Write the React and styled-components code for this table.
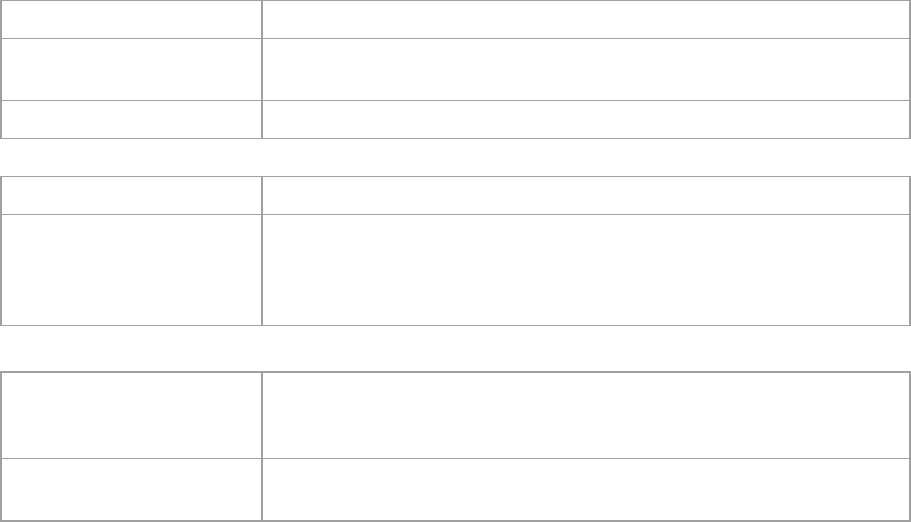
import React from "react";
import styled, { createGlobalStyle } from "styled-components";

const Global = createGlobalStyle`
  html, body { margin: 0; padding: 0; background: #ffffff; }
  body { font-family: "Liberation Sans", Arial, sans-serif; }
`;

const LINE = "#a0a0a0";

const Page = styled.div`
  display: flex;
  flex-direction: column;
  width: 911px;
`;

const Table = styled.div`
  display: flex;
  flex-direction: column;
  margin-top: ${(p) => p.$gap || 0}px;
  border-left: 2px solid ${LINE};
  border-right: 2px solid ${LINE};
  border-top: ${(p) => p.$top}px solid ${LINE};
  border-bottom: ${(p) => p.$bottom}px solid ${LINE};
`;

const Row = styled.div`
  display: grid;
  grid-template-columns: 261px 1fr;
  height: ${(p) => p.$h}px;
  & + & { border-top: 1px solid ${LINE}; }
`;

const LabelCell = styled.div`
  border-right: 2px solid ${LINE};
`;

const ValueCell = styled.div``;

const tables = [
  { gap: 0, top: 1, bottom: 1, rows: [37, 61, 37] },
  { gap: 37, top: 1, bottom: 1, rows: [37, 110] },
  { gap: 45, top: 2, bottom: 2, rows: [85, 61] },
];

export default function App() {
  return (
    <>
      <Global />
      <Page>
        {tables.map((t, i) => (
          <Table key={i} $gap={t.gap} $top={t.top} $bottom={t.bottom}>
            {t.rows.map((h, j) => (
              <Row key={j} $h={h}>
                <LabelCell />
                <ValueCell />
              </Row>
            ))}
          </Table>
        ))}
      </Page>
    </>
  );
}
